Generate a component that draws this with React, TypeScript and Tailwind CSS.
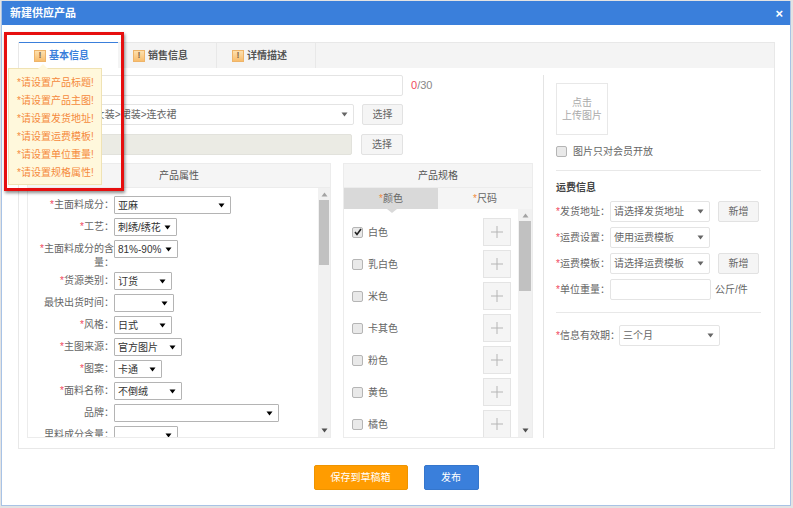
import React from 'react';

const FONT = '"Liberation Sans", "Noto Sans CJK SC", sans-serif';

const attrs = [
  { label: '主面料成分', req: true, value: '亚麻', w: 'w-[117px]' },
  { label: '工艺', req: true, value: '刺绣/绣花', w: 'w-[63px]' },
  { label: '主面料成分的含量', req: true, value: '81%-90%', w: 'w-[64px]' },
  { label: '货源类别', req: true, value: '订货', w: 'w-[58px]' },
  { label: '最快出货时间', req: false, value: '', w: 'w-[60px]' },
  { label: '风格', req: true, value: '日式', w: 'w-[58px]' },
  { label: '主图来源', req: true, value: '官方图片', w: 'w-[68px]' },
  { label: '图案', req: true, value: '卡通', w: 'w-[48px]' },
  { label: '面料名称', req: true, value: '不倒绒', w: 'w-[68px]' },
  { label: '品牌', req: false, value: '', w: 'w-[165px]' },
  { label: '里料成分含量', req: false, value: '', w: 'w-[64px]' },
];

const colors = ['白色', '乳白色', '米色', '卡其色', '粉色', '黄色', '橘色'];
const warnings = ['请设置产品标题!', '请设置产品主图!', '请设置发货地址!', '请设置运费模板!', '请设置单位重量!', '请设置规格属性!'];

const Arrow = ({ up = false, className = 'text-black' }: { up?: boolean; className?: string }) => (
  <svg width="7" height="5" viewBox="0 0 7 5" className={`shrink-0 ${className}`}>
    <path d={up ? 'M3.5 0.5L6.5 4.5H0.5Z' : 'M0.5 0.5H6.5L3.5 4.5Z'} fill="currentColor" />
  </svg>
);

const Select = ({ value, className }: { value: string; className: string }) => (
  <div className={`h-[18px] shrink-0 flex items-center justify-between pl-[3px] pr-[5px] bg-white border border-[#b4b4b4] rounded-[1px] text-[10px] text-[#333] whitespace-nowrap ${className}`}>
    <span>{value}</span>
    <Arrow />
  </div>
);

const FormSelect = ({ value, className }: { value: string; className: string }) => (
  <div className={`h-[21px] shrink-0 flex items-center justify-between pl-[3px] pr-[5px] bg-white border border-[#e4e4e4] rounded-[2px] text-[10px] text-[#666] whitespace-nowrap ${className}`}>
    <span>{value}</span>
    <Arrow className="text-[#666]" />
  </div>
);

const GrayButton = ({ children, className = 'w-[41px]' }: { children: React.ReactNode; className?: string }) => (
  <div className={`h-[21px] shrink-0 flex items-center justify-center bg-[#f5f5f5] border border-[#e2e2e2] rounded-[2px] text-[10px] text-[#666] ${className}`}>
    {children}
  </div>
);

const Scrollbar = ({ thumbTop, thumbH, width }: { thumbTop: string; thumbH: string; width: string }) => (
  <div className={`${width} shrink-0 bg-[#f1f1f1] flex flex-col items-center justify-between py-[4px] relative`}>
    <Arrow up className="text-[#a3a3a3]" />
    <div className={`absolute left-px right-px bg-[#c1c1c1] ${thumbTop} ${thumbH}`} />
    <Arrow className="text-[#505050]" />
  </div>
);

const Checkbox = ({ checked = false }: { checked?: boolean }) => (
  <div className="w-[11px] h-[11px] shrink-0 rounded-[2px] bg-[#e9e9e9] border border-[#b5b5b5] flex items-center justify-center">
    {checked && (
      <svg width="8" height="8" viewBox="0 0 8 8">
        <path d="M1 4l2 2.5L7 1" fill="none" stroke="#222" strokeWidth="1.6" />
      </svg>
    )}
  </div>
);

const Star = ({ className = 'text-[#f0475c]' }: { className?: string }) => <span className={className}>*</span>;

const WarnIcon = () => (
  <span className="w-[12px] h-[12px] shrink-0 flex items-center justify-center bg-gradient-to-b from-[#fde0ae] to-[#f8bd6c] border border-[#eeb469] text-[9px] font-bold leading-none text-[#85684a]">!</span>
);

const Tab = ({ label, active = false }: { label: string; active?: boolean }) => (
  <div className={`w-[99px] flex items-center justify-start pl-[15px] gap-[3px] text-[10px] font-bold ${active ? 'bg-white border-t border-t-[#3a7fdb] text-[#3a7fdb] -mt-px h-[26px]' : 'h-[25px] text-[#555] border-r border-[#e8e8e8]'}`}>
    <WarnIcon />
    {label}
  </div>
);

const ShipRow = ({ label, children }: { label: string; children: React.ReactNode }) => (
  <div className="flex items-center h-[21px] mb-[5px]">
    <div className="w-[54px] shrink-0 text-[10px] text-[#666] whitespace-nowrap"><Star />{label}：</div>
    {children}
  </div>
);

export default function App() {
  return (
    <div className="w-[793px] h-[508px] relative bg-[#e3e3e3] overflow-hidden pt-px pl-px" style={{ fontFamily: FONT }}>
      <div className="w-[790px] h-[505px] bg-white border-x border-b border-[#a8c3e6] flex flex-col">
        {/* header */}
        <div className="h-[24px] shrink-0 bg-[#3a7fdb] flex items-center justify-between pl-[8px] pr-[7px] text-white">
          <span className="text-[11px] font-bold">新建供应产品</span>
          <span className="text-[13px] font-bold leading-none">×</span>
        </div>

        <div className="pt-[17px] pl-[16px]">
          <div className="w-[757px] border border-[#e8e8e8]">
            {/* tabs */}
            <div className="h-[25px] bg-[#f4f4f4] flex">
              <Tab label="基本信息" active />
              <Tab label="销售信息" />
              <Tab label="详情描述" />
            </div>

            <div className="h-[380px] flex pt-[7px]">
              {/* left */}
              <div className="w-[524px] shrink-0 pl-[8px] flex flex-col">
                <div className="h-[21px] flex items-center">
                  <div className="w-[38px] shrink-0" />
                  <div className="w-[338px] h-[21px] bg-white border border-[#e4e4e4] rounded-[2px]" />
                  <div className="ml-[8px] text-[11px] text-[#888]"><span className="text-[#f0475c]">0</span>/30</div>
                </div>
                <div className="h-[21px] mt-[8px] flex items-center">
                  <div className="w-[38px] shrink-0" />
                  <FormSelect value="服装>女装>裙装>连衣裙" className="w-[289px]" />
                  <div className="w-[8px]" />
                  <GrayButton>选择</GrayButton>
                </div>
                <div className="h-[21px] mt-[9px] flex items-center">
                  <div className="w-[38px] shrink-0" />
                  <div className="w-[287px] h-[21px] bg-[#ebebe4] border border-[#e2e2dc] rounded-[2px]" />
                  <div className="w-[9px]" />
                  <GrayButton className="w-[42px]">选择</GrayButton>
                </div>

                <div className="mt-[8px] flex gap-[12px] h-[275px]">
                  {/* attributes */}
                  <div className="w-[304px] h-[275px] border border-[#ececec] flex flex-col">
                    <div className="h-[24px] shrink-0 bg-[#f5f5f5] border-b border-[#ececec] flex items-center justify-center text-[10px] text-[#555]">产品属性</div>
                    <div className="flex-1 flex overflow-hidden">
                      <div className="flex-1 overflow-hidden pt-[8px]">
                        {attrs.map((a) => (
                          <div key={a.label} className="flex items-start mb-[4px]">
                            <div className="w-[86px] shrink-0 pl-[11px] pt-[2px] -mb-[2px] text-right text-[10px] leading-[14px] text-[#666]">
                              {a.req && <Star />}{a.label}：
                            </div>
                            <Select value={a.value} className={a.w} />
                          </div>
                        ))}
                      </div>
                      <Scrollbar width="w-[12px]" thumbTop="top-[12px]" thumbH="h-[65px]" />
                    </div>
                  </div>

                  {/* specs */}
                  <div className="w-[190px] h-[275px] border border-[#ececec] flex flex-col">
                    <div className="h-[24px] shrink-0 bg-[#f5f5f5] border-b border-[#ececec] flex items-center justify-center text-[10px] text-[#555]">产品规格</div>
                    <div className="h-[21px] shrink-0 flex text-[10px] text-[#666] bg-[#f5f5f5] relative">
                      <div className="w-[94px] bg-[#d9d9d9] flex items-center justify-center"><Star className="text-[#f08a3c]" />颜色</div>
                      <div className="flex-1 flex items-center justify-center"><Star className="text-[#f08a3c]" />尺码</div>
                      <div className="absolute left-[43px] top-[21px] border-x-[5px] border-x-transparent border-t-[4px] border-t-[#d9d9d9]" />
                    </div>
                    <div className="flex-1 flex overflow-hidden">
                      <div className="flex-1 overflow-hidden pt-[9px] pl-[8px] pr-[7px]">
                        {colors.map((c, i) => (
                          <div key={c} className="h-[28px] mb-[4px] flex items-center justify-between">
                            <div className="flex items-center gap-[5px] text-[10px] text-[#666]">
                              <Checkbox checked={i === 0} />
                              {c}
                            </div>
                            <div className="w-[28px] h-[28px] bg-[#f5f5f5] border border-[#e4e4e4] flex items-center justify-center">
                              <svg width="12" height="12" viewBox="0 0 12 12">
                                <path d="M6 0v12M0 6h12" stroke="#b5b5b5" strokeWidth="1" />
                              </svg>
                            </div>
                          </div>
                        ))}
                      </div>
                      <Scrollbar width="w-[14px]" thumbTop="top-[12px]" thumbH="h-[70px]" />
                    </div>
                  </div>
                </div>
              </div>

              {/* right */}
              <div className="h-[363px] w-[232px] border-l border-[#e4e4e4] pl-[12px]">
                <div className="mt-[8px] w-[52px] h-[52px] border border-[#e8e8e8] flex items-center justify-center text-center text-[10px] leading-[13px] text-[#aaa]">
                  点击<br />上传图片
                </div>
                <div className="mt-[9px] flex items-center gap-[6px] text-[10px] text-[#666]">
                  <Checkbox />
                  图片只对会员开放
                </div>
                <div className="mt-[11px] w-[205px] h-px bg-[#e8e8e8]" />
                <div className="mt-[11px] mb-[7px] text-[10px] leading-[12px] font-bold text-[#444]">运费信息</div>
                <ShipRow label="发货地址">
                  <FormSelect value="请选择发货地址" className="w-[100px]" />
                  <GrayButton className="w-[41px] ml-[8px]">新增</GrayButton>
                </ShipRow>
                <ShipRow label="运费设置">
                  <FormSelect value="使用运费模板" className="w-[100px]" />
                </ShipRow>
                <ShipRow label="运费模板">
                  <FormSelect value="请选择运费模板" className="w-[100px]" />
                  <GrayButton className="w-[41px] ml-[8px]">新增</GrayButton>
                </ShipRow>
                <ShipRow label="单位重量">
                  <div className="w-[101px] h-[21px] bg-white border border-[#e4e4e4] rounded-[2px]" />
                  <span className="ml-[4px] text-[10px] text-[#666]">公斤/件</span>
                </ShipRow>
                <div className="mt-[12px] w-[205px] h-px bg-[#e8e8e8]" />
                <div className="mt-[12px] flex items-center h-[21px]">
                  <div className="w-[63px] shrink-0 text-[10px] text-[#666] whitespace-nowrap"><Star />信息有效期：</div>
                  <FormSelect value="三个月" className="w-[101px]" />
                </div>
              </div>
            </div>
          </div>
        </div>

        {/* footer */}
        <div className="mt-[16px] flex justify-center gap-[16px] px-[23px] text-[10px] text-white">
          <div className="w-[94px] h-[25px] bg-[#ff9c00] border border-[#ee9400] rounded-[2px] flex items-center justify-center">保存到草稿箱</div>
          <div className="w-[55px] h-[25px] bg-[#3a7fdb] border border-[#3576cc] rounded-[2px] flex items-center justify-center">发布</div>
        </div>
      </div>

      {/* warning popover with red callout */}
      <div className="absolute left-[8px] top-[68px] w-[94px] h-[117px] bg-[#fff8dc] border border-[#f0e3b4] pt-[5px] pl-[8px] text-[10px] leading-[18px] text-[#f58a3c] whitespace-nowrap">
        <div className="absolute left-[29px] -top-[5px] border-x-[5px] border-x-transparent border-b-[5px] border-b-[#fff8dc]" />
        {warnings.map((w) => (
          <div key={w}>*{w}</div>
        ))}
      </div>
      <div className="absolute left-[4px] top-[32px] w-[120px] h-[159px] border-[3px] border-[#e60f0f] shadow-[1px_2px_3px_rgba(0,0,0,0.45)]" />
    </div>
  );
}
